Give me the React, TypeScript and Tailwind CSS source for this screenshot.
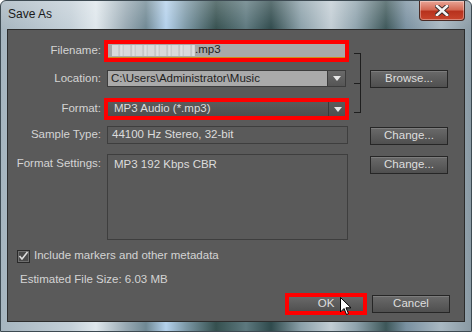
import type { ReactNode } from "react";

function Button({ children, red = false, className = "" }: { children: ReactNode; red?: boolean; className?: string }) {
  return (
    <div
      className={`relative flex h-[18px] w-[78px] items-center justify-center border border-[#262626] bg-[linear-gradient(180deg,#6a6a6a,#4f4f4f)] text-[11.5px] leading-none text-[#dedede] shadow-[inset_0_1px_0_#7c7c7c] ${
        red ? "outline-4 -outline-offset-2 outline-[#ff0000]" : ""
      } ${className}`}
    >
      {children}
    </div>
  );
}

function Label({ children }: { children: ReactNode }) {
  return <div className="w-[93px] shrink-0 text-right text-[11.5px] leading-none text-[#d4d4d4]">{children}</div>;
}

function Triangle() {
  return (
    <svg width="8" height="5" viewBox="0 0 8 5">
      <path d="M0 0 H8 L4 5 Z" fill="#e8e8e8" />
    </svg>
  );
}

function CloseGlyph() {
  return (
    <svg width="14" height="11" viewBox="0 0 14 11">
      <path d="M2 1 L12 10 M12 1 L2 10" stroke="#3a2a2a" strokeWidth="4.4" strokeLinecap="square" fill="none" />
      <path d="M2 1 L12 10 M12 1 L2 10" stroke="#f4f4f4" strokeWidth="2.6" strokeLinecap="square" fill="none" />
    </svg>
  );
}

function Cursor() {
  return (
    <svg className="absolute left-[52px] top-[1px]" width="12" height="19" viewBox="0 0 12 19">
      <path d="M0.5 0.5 V15 L4 11.5 L6.5 17.5 L8.5 16.6 L6 10.8 H11 Z" fill="#ffffff" stroke="#000000" strokeWidth="1" />
    </svg>
  );
}

export default function App() {
  return (
    <div className="flex h-[332px] w-[472px] flex-col overflow-hidden rounded-t-[6px] border border-[#3d4a52] bg-[linear-gradient(180deg,rgba(255,255,255,0.22),rgba(255,255,255,0)_9%),linear-gradient(90deg,#a6b5bf_0px,#c4d0d8_70px,#dfe7ec_95px,#98a9b3_125px,#6f8893_145px,#b4d1ec_165px,#7c98a6_185px,#35504f_215px,#5d787e_245px,#2f4a4c_270px,#8ba0a9_300px,#c2cdd4_330px,#8fa3ad_355px,#3d5759_385px,#7990a0_405px,#a9b8c2_440px,#8797a1_472px)] font-['Liberation_Sans','DejaVu_Sans',sans-serif]">
      {/* title bar */}
      <div className="flex h-[28px] shrink-0 items-start justify-between">
        <div className="ml-[7px] mt-[7px] text-[12px] leading-none text-[#1a1a1a]">Save As</div>
        <div className="mr-[6px] flex h-[20px] w-[46px] items-center justify-center rounded-b-[4px] border border-t-0 border-[#4a2a24] bg-[linear-gradient(180deg,#e9a596_0%,#d46a55_45%,#b8321d_55%,#c8452c_100%)] shadow-[inset_0_0_0_1px_rgba(255,255,255,0.35)]">
          <CloseGlyph />
        </div>
      </div>

      {/* dialog body */}
      <div className="mx-[6px] mb-[9px] flex grow flex-col border border-[#2c2c2c] bg-[#5a5a5a]">
        {/* filename / location / format */}
        <div className="mt-[13px] flex">
          <div className="flex flex-col">
            <div className="flex h-[16px] items-center gap-[6px]">
              <Label>Filename:</Label>
              <div className="flex h-[16px] w-[239px] items-center border-b-2 border-[#d08a1a] bg-[#a9a9a9] pl-[5px] text-[11.5px] leading-none text-[#1e1e1e] outline-4 -outline-offset-1 outline-[#ff0000]">
                <span className="inline-block h-[11px] w-[83px] bg-[repeating-linear-gradient(90deg,#d9d9d9_0px,#d9d9d9_6px,#bcbcbc_7px,#e4e4e4_9px,#c6c6c6_12px)]" />
                <span>.mp3</span>
              </div>
            </div>
            <div className="mt-[11px] flex h-[17px] items-center gap-[6px]">
              <Label>Location:</Label>
              <div className="flex h-[17px] w-[239px] border border-[#3c3c3c]">
                <div className="flex grow items-center bg-[#aaaaaa] pl-[3px] text-[11.5px] leading-none text-[#1e1e1e]">
                  C:\Users\Administrator\Music
                </div>
                <div className="flex w-[18px] items-center justify-center border-l border-[#3c3c3c] bg-[linear-gradient(180deg,#6a6a6a,#555555)]">
                  <Triangle />
                </div>
              </div>
            </div>
            <div className="mt-[14px] flex h-[16px] items-center gap-[6px]">
              <Label>Format:</Label>
              <div className="flex h-[16px] w-[239px] bg-[linear-gradient(180deg,#5c5c5c,#4e4e4e)] outline-4 -outline-offset-1 outline-[#ff0000]">
                <div className="flex grow items-center pl-[7px] text-[11.5px] leading-none text-[#dcdcdc]">MP3 Audio (*.mp3)</div>
                <div className="flex w-[18px] items-center justify-center border-l border-[#3a3a3a]">
                  <Triangle />
                </div>
              </div>
            </div>
          </div>
          {/* link bracket */}
          <div className="ml-[8px] mt-[10px] flex h-[60px] w-[7px] flex-col justify-center border-y border-r border-[#1e1e1e]">
            <div className="h-px w-[7px] bg-[#1e1e1e]" />
          </div>
          <Button className="ml-[9px] mt-[27px]">Browse...</Button>
        </div>

        {/* sample type */}
        <div className="mt-[9px] flex items-start">
          <div className="flex h-[18px] items-center gap-[6px]">
            <Label>Sample Type:</Label>
            <div className="flex h-[18px] w-[241px] items-center border border-[#3e3e3e] pl-[4px] text-[11.5px] leading-none text-[#dcdcdc]">
              44100 Hz Stereo, 32-bit
            </div>
          </div>
          <Button className="ml-[22px] mt-px">Change...</Button>
        </div>

        {/* format settings */}
        <div className="mt-[9px] flex items-start">
          <div className="flex items-start gap-[6px]">
            <div className="mt-[4px]">
              <Label>Format Settings:</Label>
            </div>
            <div className="h-[86px] w-[241px] border border-[#3e3e3e] pl-[6px] pt-[4px] text-[11.5px] leading-none text-[#dcdcdc]">
              MP3 192 Kbps CBR
            </div>
          </div>
          <Button className="ml-[22px] mt-[2px]">Change...</Button>
        </div>

        {/* checkbox */}
        <div className="ml-[9px] mt-[9px] flex h-[14px] items-center gap-[4px]">
          <div className="flex h-[13px] w-[13px] items-center justify-center border border-[#2a2a2a] bg-[#4a4a4a] shadow-[inset_0_0_0_1px_#6e6e6e]">
            <svg width="11" height="10" viewBox="0 0 11 10">
              <path d="M1.5 5 L4 8 L9.5 1" stroke="#dedede" strokeWidth="1.6" fill="none" />
            </svg>
          </div>
          <div className="text-[11.5px] leading-none text-[#d4d4d4]">Include markers and other metadata</div>
        </div>

        <div className="ml-[12px] mt-[9px] text-[11.5px] leading-[14px] text-[#d4d4d4]">Estimated File Size: 6.03 MB</div>

        {/* buttons */}
        <div className="mr-[14px] mt-[9px] flex justify-end gap-[7px]">
          <Button red>
            OK
            <Cursor />
          </Button>
          <Button>Cancel</Button>
        </div>
      </div>
    </div>
  );
}
